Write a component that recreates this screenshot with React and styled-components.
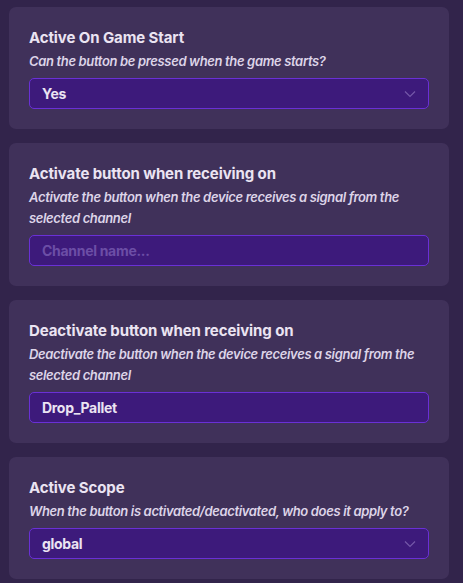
import React from 'react'
import styled, { createGlobalStyle } from 'styled-components'

const GlobalStyle = createGlobalStyle`
  html, body {
    margin: 0;
    padding: 0;
    background: #32244b;
  }
  body {
    font-family: 'Inter', 'Noto Sans', sans-serif;
  }
`

const Page = styled.div`
  display: flex;
  flex-direction: column;
  gap: 14px;
  padding: 7px 14px 7px 9px;
  min-height: 583px;
  box-sizing: border-box;
`

const Card = styled.section`
  background: #40315a;
  border-radius: 7px;
  padding: 20px 20px 20px;
  display: flex;
  flex-direction: column;
`

const Title = styled.h3`
  margin: 0 0 3px;
  font-size: 15px;
  line-height: 21px;
  font-weight: 700;
  color: #ebe4f2;
  letter-spacing: -0.1px;
`

const Hint = styled.p`
  margin: 0 0 6px;
  font-size: 13px;
  line-height: 21px;
  font-weight: 600;
  font-style: italic;
  color: #ddd4e8;
  letter-spacing: -0.35px;
`

const Field = styled.div`
  position: relative;
  height: 31px;
  box-sizing: border-box;
  border: 1px solid #6a30d6;
  border-radius: 5px;
  background: #3d1a7b;
  display: flex;
  align-items: center;
  padding: 0 12px;
`

const Value = styled.span`
  flex: 1;
  font-size: 14px;
  font-weight: 700;
  color: ${p => (p.$placeholder ? '#6c4ea6' : '#ebe4f2')};
  letter-spacing: -0.3px;
`

const Chevron = () => (
  <svg width="12" height="8" viewBox="0 0 12 8" fill="none">
    <path d="M1 1.5 L6 6.5 L11 1.5" stroke="#7458a8" strokeWidth="1.2" />
  </svg>
)

const settings = [
  {
    title: 'Active On Game Start',
    hint: 'Can the button be pressed when the game starts?',
    value: 'Yes',
    select: true,
  },
  {
    title: 'Activate button when receiving on',
    hint: 'Activate the button when the device receives a signal from the selected channel',
    value: 'Channel name...',
    placeholder: true,
  },
  {
    title: 'Deactivate button when receiving on',
    hint: 'Deactivate the button when the device receives a signal from the selected channel',
    value: 'Drop_Pallet',
  },
  {
    title: 'Active Scope',
    hint: 'When the button is activated/deactivated, who does it apply to?',
    value: 'global',
    select: true,
  },
]

const App = () => (
  <>
    <GlobalStyle />
    <Page>
      {settings.map(s => (
        <Card key={s.title}>
          <Title>{s.title}</Title>
          <Hint>{s.hint}</Hint>
          <Field>
            <Value $placeholder={s.placeholder}>{s.value}</Value>
            {s.select && <Chevron />}
          </Field>
        </Card>
      ))}
    </Page>
  </>
)

export default App
